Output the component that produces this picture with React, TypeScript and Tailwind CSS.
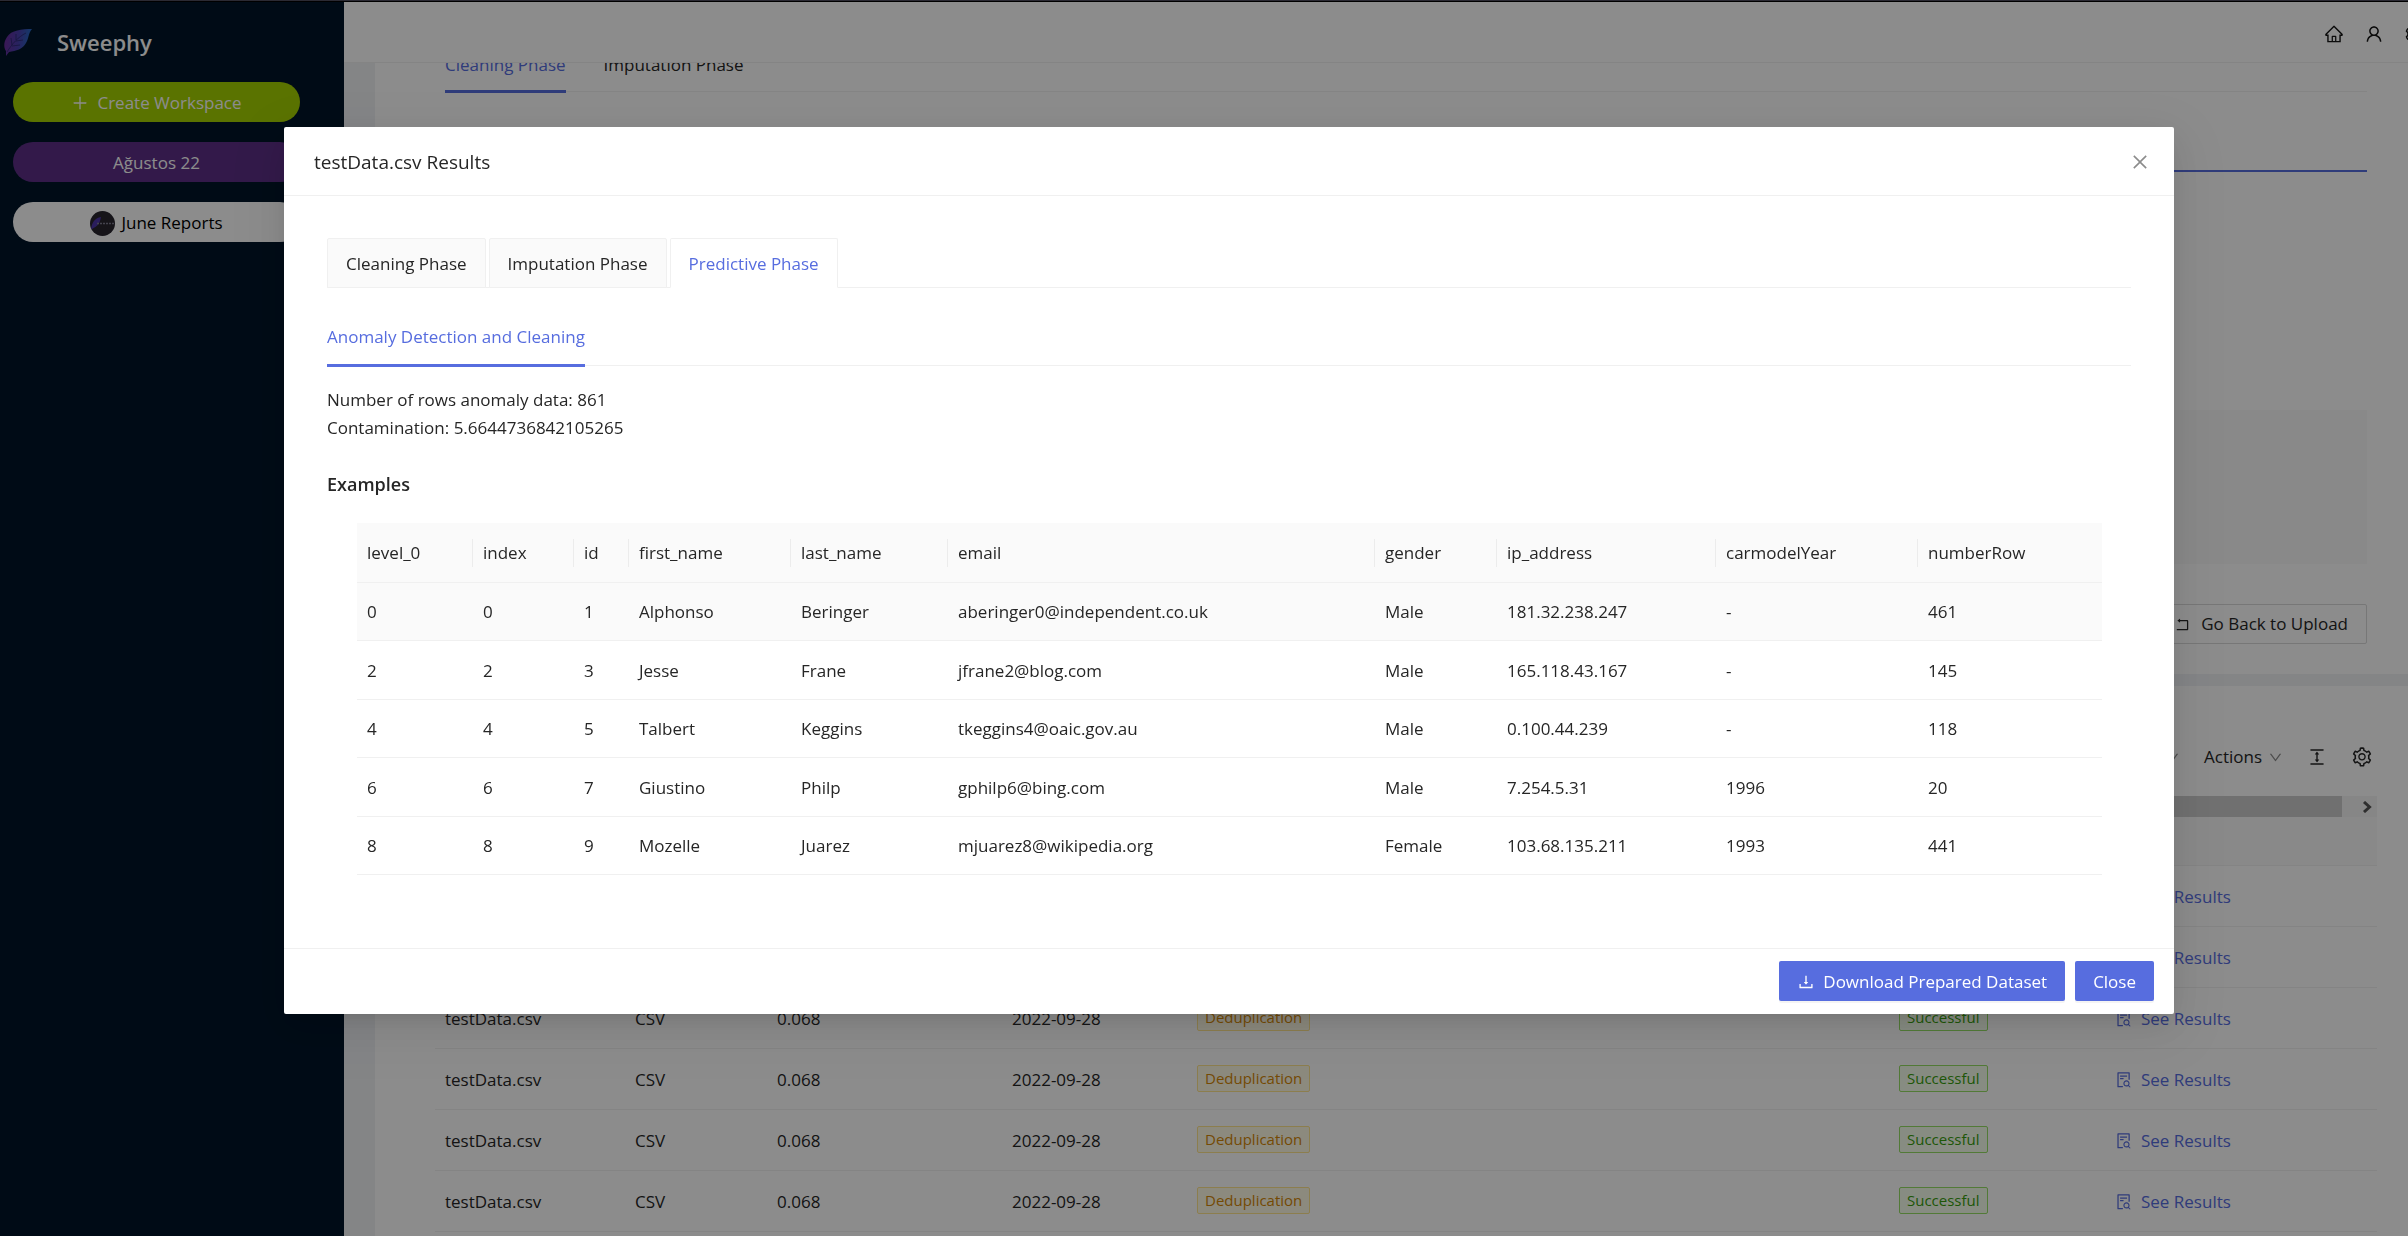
import clsx from 'clsx'
import {
  AiOutlineClose,
  AiOutlineColumnHeight,
  AiOutlineDown,
  AiOutlineDownload,
  AiOutlineFileSearch,
  AiOutlineHome,
  AiOutlinePlus,
  AiOutlineRollback,
  AiOutlineSetting,
  AiOutlineUser,
} from 'react-icons/ai'

const COLUMNS = [
  { key: 'level_0', width: 'w-[116px]' },
  { key: 'index', width: 'w-[101px]' },
  { key: 'id', width: 'w-[55px]' },
  { key: 'first_name', width: 'w-[162px]' },
  { key: 'last_name', width: 'w-[157px]' },
  { key: 'email', width: 'w-[427px]' },
  { key: 'gender', width: 'w-[122px]' },
  { key: 'ip_address', width: 'w-[219px]' },
  { key: 'carmodelYear', width: 'w-[202px]' },
  { key: 'numberRow', width: 'w-[184px]' },
]

const EXAMPLES = [
  ['0', '0', '1', 'Alphonso', 'Beringer', 'aberinger0@independent.co.uk', 'Male', '181.32.238.247', '-', '461'],
  ['2', '2', '3', 'Jesse', 'Frane', 'jfrane2@blog.com', 'Male', '165.118.43.167', '-', '145'],
  ['4', '4', '5', 'Talbert', 'Keggins', 'tkeggins4@oaic.gov.au', 'Male', '0.100.44.239', '-', '118'],
  ['6', '6', '7', 'Giustino', 'Philp', 'gphilp6@bing.com', 'Male', '7.254.5.31', '1996', '20'],
  ['8', '8', '9', 'Mozelle', 'Juarez', 'mjuarez8@wikipedia.org', 'Female', '103.68.135.211', '1993', '441'],
]

const HISTORY = [1, 2, 3, 4, 5, 6]

function Leaf({ className }: { className?: string }) {
  return (
    <svg viewBox="0 0 28 28" className={className} aria-hidden>
      <defs>
        <linearGradient id="leaf" x1="0" y1="0.4" x2="1" y2="0.5">
          <stop offset="0" stopColor="#6b2c9c" />
          <stop offset="0.5" stopColor="#4a3fae" />
          <stop offset="1" stopColor="#1f6fc4" />
        </linearGradient>
      </defs>
      <path d="M28 1C18 1 7 2 3 9c-4 6-3 11-1 14l0 5 3-4c7-1 14-3 17-9 3-5 2-9 6-14Z" fill="url(#leaf)" />
      <path d="M3 24C8 16 14 9 22 5M8 17l-1-7M12 12V6M8 18l8-1M12 13l7-1" fill="none" stroke="#2a2a70" strokeWidth="0.8" />
    </svg>
  )
}

function Sidebar() {
  return (
    <aside className="w-[344px] shrink-0 bg-[#001529] flex flex-col">
      <div className="h-20 pl-1 flex items-center gap-[25px]">
        <Leaf className="size-7" />
        <span className="text-[22px] font-semibold text-white">Sweephy</span>
      </div>
      <div className="pl-[13px] pr-11 flex flex-col gap-5">
        <button className="h-10 pt-0.5 rounded-full bg-[#a4d100] text-white flex items-center justify-center gap-2">
          <AiOutlinePlus className="size-[18px]" />
          Create Workspace
        </button>
        <button className="h-10 pt-0.5 rounded-full bg-[#5d2f87] text-white">Ağustos 22</button>
        <button className="h-10 pt-0.5 rounded-full bg-white text-black flex items-center justify-center gap-1.5">
          <svg viewBox="0 0 25 25" className="size-[25px]" aria-hidden>
            <circle cx="12.5" cy="12.5" r="12.5" fill="#28252f" />
            <path d="M1 18C2 11 5 7 11 6c-1 6-3 9-9 12Z" fill="#4d35a8" />
            <path d="M7 12.500h17" stroke="#7d7b8c" strokeWidth="1.500" strokeDasharray="2 1" />
          </svg>
          June Reports
        </button>
      </div>
    </aside>
  )
}

function TopBar() {
  return (
    <header className="h-[61px] pt-1 shrink-0 bg-white border-b border-[#f0f0f0] flex items-center justify-end gap-5 text-[#141414] relative z-10">
      <AiOutlineHome className="size-5" />
      <AiOutlineUser className="size-5" />
      <AiOutlineSetting className="size-5 -mr-4" />
    </header>
  )
}

function Workspace() {
  return (
    <main className="flex-1 pl-[31px] flex flex-col gap-3">
      <section className="bg-white -mt-[11px] pl-[70px] pr-[41px] h-[622px] shrink-0 flex flex-col">
        <nav className="h-10 pt-px border-b border-[#f0f0f0] flex gap-[38px]">
          <a href="#cleaning" className="h-10 text-[#576ddf] border-b-3 border-[#576ddf]">Cleaning Phase</a>
          <a href="#imputation">Imputation Phase</a>
        </nav>
        <div className="mt-[78px] border-b-2 border-[#576ddf]" />
        <div className="mt-[238px] h-[154px] bg-[#fafafa]" />
        <button className="mt-10 h-10 px-[18px] self-end border border-[#d9d9d9] rounded-xs flex items-center gap-[10px]">
          <AiOutlineRollback className="size-[17px]" />
          Go Back to Upload
        </button>
      </section>
      <section className="bg-white flex-1 pl-[60px] pr-[31px] flex flex-col">
        <div className="h-[110px] pt-8 pr-1 flex items-center justify-end gap-6">
          <button aria-label="More">
            <AiOutlineDown className="size-[15px] text-[#8c8c8c]" />
          </button>
          <button className="flex items-center gap-1.5">
            Actions
            <AiOutlineDown className="size-[15px] text-[#8c8c8c]" />
          </button>
          <AiOutlineColumnHeight className="size-5" />
          <AiOutlineSetting className="size-[22px]" />
        </div>
        <div className="h-[21px] bg-[#f5f5f5] flex items-center gap-5 pr-1">
          <div className="h-full flex-1 bg-[#cdcdcd]" />
          <svg viewBox="0 0 10 12" className="w-[11px] h-3" aria-hidden>
            <path d="M1.500 1l5.500 5-5.500 5" fill="none" stroke="#555" strokeWidth="3" />
          </svg>
        </div>
        <table className="w-full table-fixed">
          <thead>
            <tr className="h-12 bg-[#fafafa] border-b border-[#f0f0f0]">
              <th className="w-[190px]" />
              <th className="w-[142px]" />
              <th className="w-[235px]" />
              <th className="w-[185px]" />
              <th className="w-[702px]" />
              <th className="w-[217px]" />
              <th className="w-[271px]" />
            </tr>
          </thead>
          <tbody>
            {HISTORY.map(n => (
              <tr key={n} className="h-[61px] border-b border-[#f0f0f0]">
                <td className="pl-[10px] pt-0.5">testData.csv</td>
                <td className="pl-[10px] pt-0.5">CSV</td>
                <td className="pl-[10px] pt-0.5">0.068</td>
                <td className="pl-[10px] pt-0.5">2022-09-28</td>
                <td className="pl-[10px]">
                  <span className="inline-block px-[7px] text-[15px] leading-[25px] rounded-xs border border-[#ffe58f] bg-[#fffbe6] text-[#d48806]">
                    Deduplication
                  </span>
                </td>
                <td className="pl-[10px]">
                  <span className="inline-block px-[7px] text-[15px] leading-[25px] rounded-xs border border-[#95de64] bg-[#f6ffed] text-[#389e0d]">
                    Successful
                  </span>
                </td>
                <td className="pl-[9px] pt-0.5">
                  <a href="#results" className="flex items-center gap-2 text-[#576ddf]">
                    <AiOutlineFileSearch className="size-[18px]" />
                    See Results
                  </a>
                </td>
              </tr>
            ))}
          </tbody>
        </table>
      </section>
    </main>
  )
}

function ResultsModal() {
  return (
    <div
      className="w-full bg-white rounded-xs shadow-[0_8px_20px_-10px_rgba(0,0,0,0.12),0_11px_35px_rgba(0,0,0,0.08),0_15px_60px_20px_rgba(0,0,0,0.05)]"
      role="dialog"
      aria-modal
      aria-labelledby="results-title"
    >
      <div className="h-[69px] pt-0.5 pl-[30px] pr-6 flex items-center justify-between border-b border-[#f0f0f0]">
        <h2 id="results-title" className="text-[19px]">testData.csv Results</h2>
        <button aria-label="Close dialog" className="text-[#8c8c8c]">
          <AiOutlineClose className="size-5" />
        </button>
      </div>

      <div className="px-[43px] pt-[42px] h-[752px]">
        <div role="tablist" className="h-[50px] flex gap-[3px] border-b border-[#f0f0f0]">
          {['Cleaning Phase', 'Imputation Phase', 'Predictive Phase'].map(tab => {
            const active = tab === 'Predictive Phase'
            return (
              <button
                key={tab}
                role="tab"
                aria-selected={active}
                className={clsx(
                  'h-[50px] px-[18px] pt-0.5 border border-[#f0f0f0] rounded-t-xs',
                  active ? 'bg-white border-b-white text-[#576ddf]' : 'bg-[#fafafa]',
                )}
              >
                {tab}
              </button>
            )
          })}
        </div>

        <div role="tablist" className="mt-5 h-[58px] flex border-b border-[#f0f0f0]">
          <button role="tab" aria-selected className="h-[59px] pt-0.5 text-[#576ddf] border-b-3 border-[#576ddf]">
            Anomaly Detection and Cleaning
          </button>
        </div>

        <div className="mt-5 leading-7">
          <p>Number of rows anomaly data: 861</p>
          <p>Contamination: 5.6644736842105265</p>
        </div>

        <h3 className="mt-7 text-lg font-semibold">Examples</h3>

        <div className="mt-[25px] px-[30px]">
          <table className="w-full h-[352px] table-fixed text-left">
            <thead>
              <tr className="h-[59px] bg-[#fafafa] border-b border-[#f0f0f0]">
                {COLUMNS.map((col, i) => (
                  <th key={col.key} className={clsx('font-normal pt-0.5', col.width)}>
                    <div
                      className={clsx(
                        'pl-[10px] h-7 leading-7 border-[#ececec]',
                        i < COLUMNS.length - 1 && 'border-r',
                      )}
                    >
                      {col.key}
                    </div>
                  </th>
                ))}
              </tr>
            </thead>
            <tbody>
              {EXAMPLES.map((row, i) => (
                <tr key={row[0]} className={clsx('h-[58px] border-b border-[#f0f0f0]', i === 0 && 'bg-[#fafafa]')}>
                  {row.map((cell, j) => (
                    <td key={COLUMNS[j].key} className="pl-[10px] pt-0.5">{cell}</td>
                  ))}
                </tr>
              ))}
            </tbody>
          </table>
        </div>
      </div>

      <div className="h-[66px] px-5 pb-px flex items-center justify-end gap-[10px] border-t border-[#f0f0f0] text-white">
        <button className="h-10 px-[18px] pt-0.5 rounded-xs bg-[#576ddf] shadow-[0_2px_0_rgba(0,0,0,0.045)] flex items-center gap-2">
          <AiOutlineDownload className="size-[18px]" />
          Download Prepared Dataset
        </button>
        <button className="h-10 px-[18px] pt-0.5 rounded-xs bg-[#576ddf] shadow-[0_2px_0_rgba(0,0,0,0.045)]">Close</button>
      </div>
    </div>
  )
}

export default function App() {
  return (
    <div className="h-screen overflow-hidden flex flex-col bg-[#f0f2f5] text-[17px] leading-6 text-[#262626] font-['Open_Sans','Noto_Sans',sans-serif]">
      <div className="h-[2px] shrink-0 bg-[#2b2a33] border-b border-black relative z-30" />
      <div className="flex-1 min-h-0 flex">
        <Sidebar />
        <div className="flex-1 min-w-0 flex flex-col">
          <TopBar />
          <Workspace />
        </div>
      </div>
      <div className="fixed inset-0 z-20 bg-black/45 pt-[127px] pl-[284px] pr-[234px]">
        <ResultsModal />
      </div>
    </div>
  )
}
